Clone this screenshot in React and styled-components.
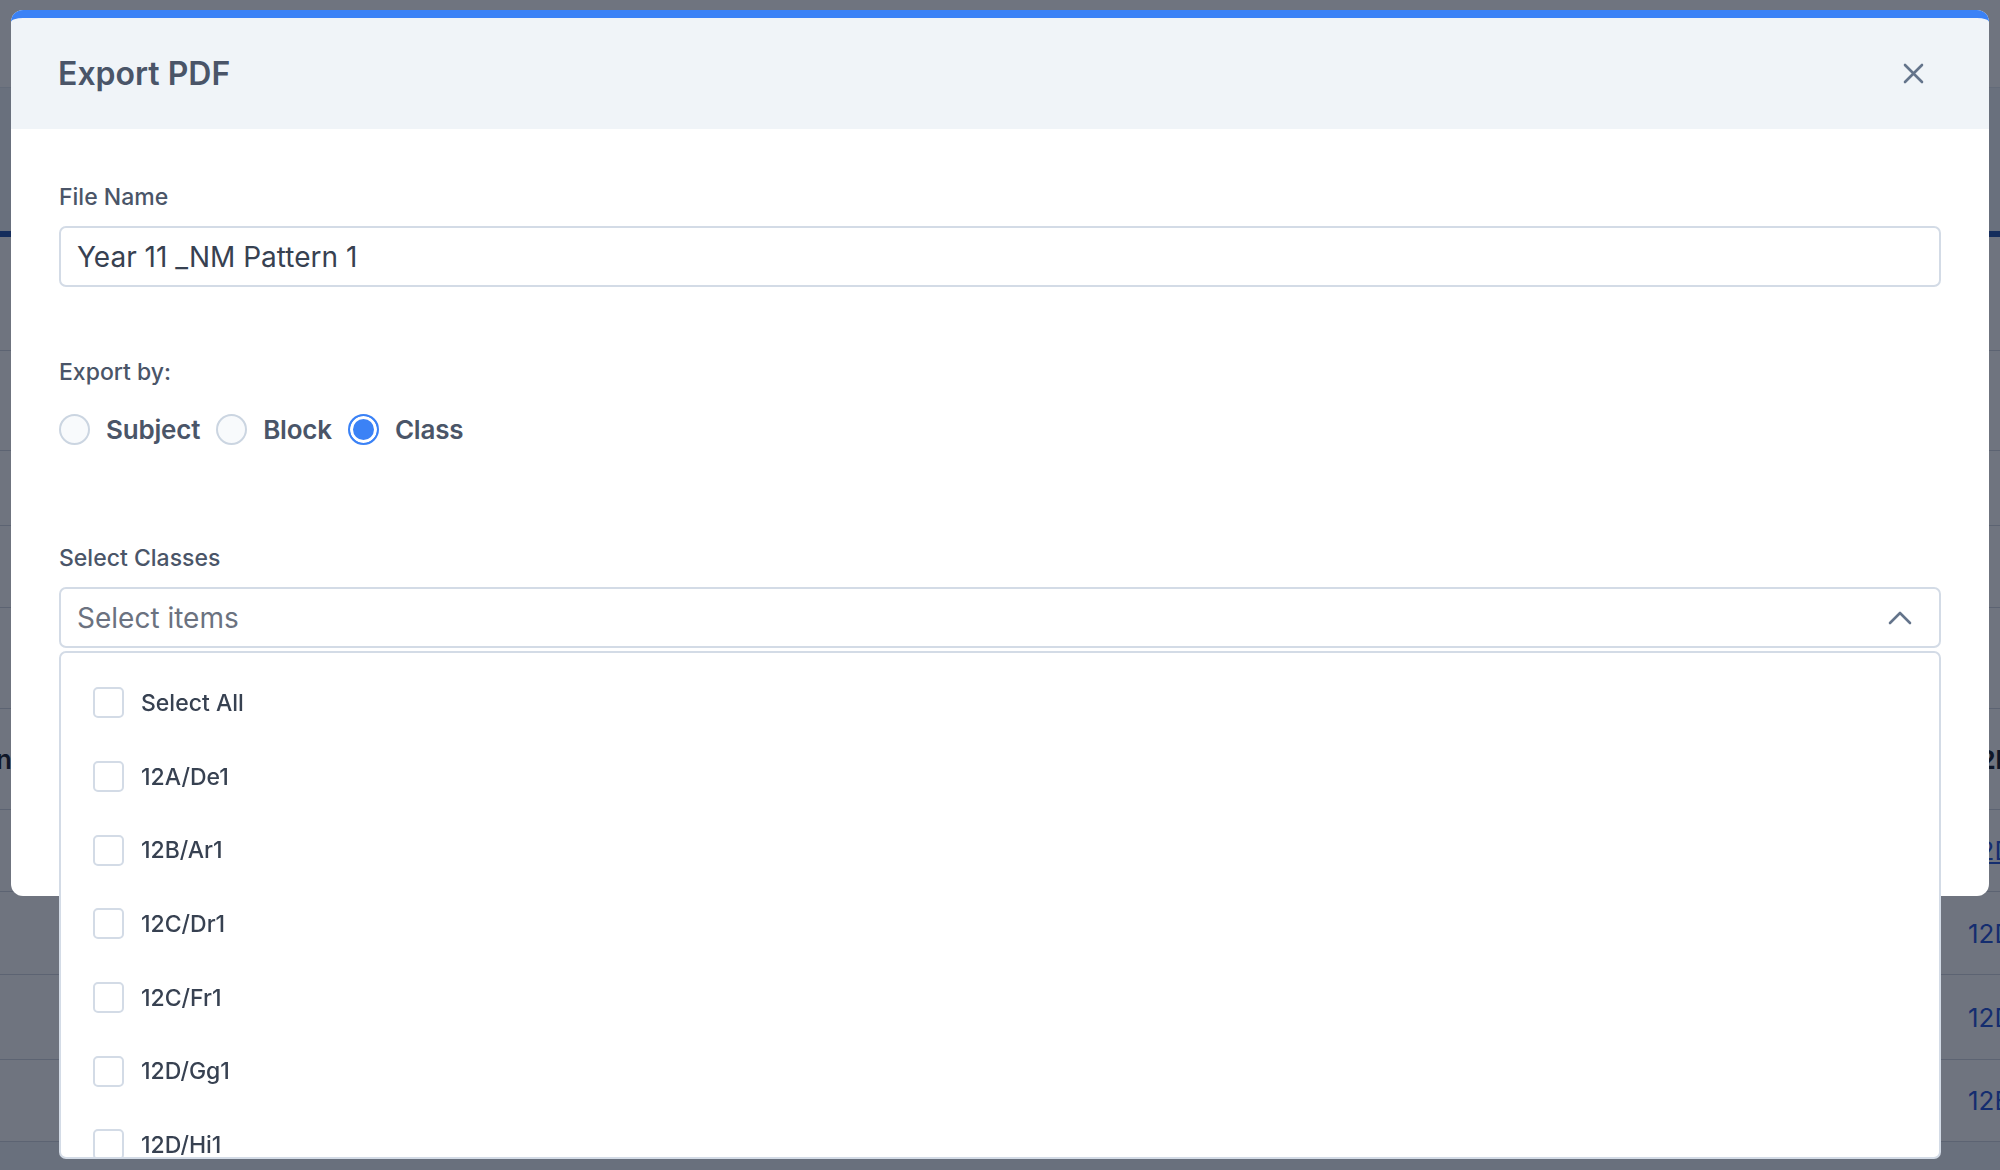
import React from "react";
import styled, { createGlobalStyle } from "styled-components";

const GlobalStyle = createGlobalStyle`
  * { box-sizing: border-box; }
  html, body { margin: 0; padding: 0; }
  body {
    width: 2000px;
    height: 1170px;
    overflow: hidden;
    font-family: Inter, "Noto Sans", sans-serif;
    background: #f1f5f9;
  }
`;

const classes = [
  "Select All",
  "12A/De1",
  "12B/Ar1",
  "12C/Dr1",
  "12C/Fr1",
  "12D/Gg1",
  "12D/Hi1",
  "12E/Ma1",
  "12E/Ps1",
];

// rows of the page table behind the overlay
const rows = [
  { h: 114 },
  { h: 100 },
  { h: 75 },
  { h: 82 },
  { h: 101 },
  { h: 101, left: "Column", right: "12D/Gg1", dark: true },
  { h: 82, right: "12D/Gg1", link: true },
  { h: 83, right: "12D/Hi1" },
  { h: 85, right: "12D/Hi1" },
  { h: 82, right: "12E/Ma1" },
];

const App = () => {
  return (
    <>
      <GlobalStyle />
      <Page>
        <TopBar />
        <Toolbar />
        <Table>
          {rows.map((r, i) => (
            <Row key={i} $h={r.h}>
              <EdgeCell>{r.left}</EdgeCell>
              <Spacer />
              <RightCell $dark={r.dark} $link={r.link}>
                {r.right}
              </RightCell>
            </Row>
          ))}
        </Table>
      </Page>

      <Overlay>
        <Modal>
          <Header>
            <Title>Export PDF</Title>
            <CloseButton aria-label="Close">
              <svg width="21" height="21" viewBox="0 0 21 21" fill="none">
                <path
                  d="M2 2L19 19M19 2L2 19"
                  stroke="#64748b"
                  strokeWidth="2.6"
                  strokeLinecap="round"
                />
              </svg>
            </CloseButton>
          </Header>

          <Body>
            <Field>
              <Label>File Name</Label>
              <TextInput defaultValue="Year 11 _NM Pattern 1" />
            </Field>

            <Field $mt={71}>
              <Label $mb={28}>Export by:</Label>
              <RadioRow>
                <Option>
                  <Radio type="radio" name="by" />
                  <OptionText>Subject</OptionText>
                </Option>
                <Option>
                  <Radio type="radio" name="by" />
                  <OptionText>Block</OptionText>
                </Option>
                <Option>
                  <Radio type="radio" name="by" defaultChecked />
                  <OptionText>Class</OptionText>
                </Option>
              </RadioRow>
            </Field>

            <Field $mt={99}>
              <Label>Select Classes</Label>
              <SelectWrap>
                <SelectBox>
                  <Placeholder>Select items</Placeholder>
                  <svg width="24" height="15" viewBox="0 0 24 15" fill="none">
                    <path
                      d="M2 13L12 3L22 13"
                      stroke="#64748b"
                      strokeWidth="2.6"
                      strokeLinecap="round"
                      strokeLinejoin="round"
                    />
                  </svg>
                </SelectBox>
                <Menu>
                  {classes.map(c => (
                    <Item key={c}>
                      <Check />
                      <ItemText>{c}</ItemText>
                    </Item>
                  ))}
                </Menu>
              </SelectWrap>
            </Field>
          </Body>
        </Modal>
      </Overlay>
    </>
  );
};

const Page = styled.div`
  width: 2000px;
  height: 1170px;
  overflow: hidden;
`;

const TopBar = styled.div`
  height: 88px;
  background: #ffffff;
  border-bottom: 1px solid #e2e8f0;
`;

const Toolbar = styled.div`
  height: 149px;
  background: #f1f5f9;
  border-bottom: 6px solid #1e4fa8;
`;

const Table = styled.div`
  background: #ffffff;
`;

const Row = styled.div`
  display: flex;
  align-items: center;
  height: ${p => p.$h}px;
  border-bottom: 1px solid #cfd5de;
`;

const EdgeCell = styled.div`
  width: 12px;
  overflow: hidden;
  display: flex;
  justify-content: flex-end;
  white-space: nowrap;
  font-size: 26px;
  font-weight: 600;
  color: #111827;
`;

const Spacer = styled.div`
  flex: 1;
`;

const RightCell = styled.div`
  width: 32px;
  overflow: hidden;
  white-space: nowrap;
  font-size: 26px;
  font-weight: ${p => (p.$dark ? 700 : 400)};
  color: ${p => (p.$dark ? "#111827" : "#1d4ed8")};
  text-decoration: ${p => (p.$link ? "underline" : "none")};
`;

const Overlay = styled.div`
  position: fixed;
  inset: 0;
  background: rgba(15, 23, 42, 0.6);
  padding: 10px 11px;
`;

const Modal = styled.div`
  position: relative;
  background: #ffffff;
  border-radius: 12px;
`;

const Header = styled.div`
  height: 119px;
  display: flex;
  align-items: center;
  justify-content: space-between;
  padding: 0 65px 0 47px;
  background: #f0f4f8;
  border-top: 8px solid #3b82f6;
  border-radius: 12px 12px 0 0;
`;

const Title = styled.h2`
  margin: 0;
  font-size: 32px;
  font-weight: 600;
  color: #4a5568;
`;

const CloseButton = styled.button`
  display: flex;
  width: 21px;
  height: 21px;
  padding: 0;
  border: none;
  background: none;
  cursor: pointer;
`;

const Body = styled.div`
  padding: 54px 48px 248px;
`;

const Field = styled.div`
  margin-top: ${p => p.$mt || 0}px;
`;

const Label = styled.div`
  font-size: 23px;
  line-height: 28px;
  font-weight: 500;
  color: #4a5568;
  margin-bottom: ${p => p.$mb || 15}px;
`;

const TextInput = styled.input`
  display: block;
  width: 100%;
  height: 61px;
  padding: 0 16px;
  border: 2px solid #d3dbe6;
  border-radius: 7px;
  font-family: Inter, "Noto Sans", sans-serif;
  font-size: 28px;
  color: #374151;
  outline: none;
`;

const RadioRow = styled.div`
  display: flex;
  align-items: center;
  gap: 16px;
  height: 31px;
`;

const Option = styled.label`
  display: flex;
  align-items: center;
  gap: 16px;
  cursor: pointer;
`;

const Radio = styled.input`
  appearance: none;
  margin: 0;
  width: 31px;
  height: 31px;
  border-radius: 50%;
  border: 2px solid #cbd5e1;
  background: #f8fafc;

  &:checked {
    border-color: #3b82f6;
    background: #3b82f6;
    box-shadow: inset 0 0 0 3px #ffffff;
  }
`;

const OptionText = styled.span`
  font-size: 26px;
  font-weight: 600;
  letter-spacing: -0.2px;
  color: #4a5568;
`;

const SelectWrap = styled.div`
  position: relative;
`;

const SelectBox = styled.div`
  height: 61px;
  display: flex;
  align-items: center;
  justify-content: space-between;
  padding: 0 27px 0 16px;
  border: 2px solid #d3dbe6;
  border-radius: 7px;
  background: #ffffff;
`;

const Placeholder = styled.span`
  font-size: 28px;
  color: #6b7280;
`;

const Menu = styled.div`
  position: absolute;
  top: calc(100% + 3px);
  left: 0;
  right: 0;
  height: 508px;
  overflow: hidden;
  padding: 13px 0 0 32px;
  background: #ffffff;
  border: 2px solid #d3dbe6;
  border-radius: 7px;
  z-index: 2;
`;

const Item = styled.div`
  height: 73.7px;
  display: flex;
  align-items: center;
  gap: 17px;
`;

const Check = styled.span`
  width: 31px;
  height: 31px;
  border: 2px solid #d3dbe6;
  border-radius: 5px;
  background: #ffffff;
`;

const ItemText = styled.span`
  font-size: 23px;
  font-weight: 500;
  color: #374151;
`;

export default App;
